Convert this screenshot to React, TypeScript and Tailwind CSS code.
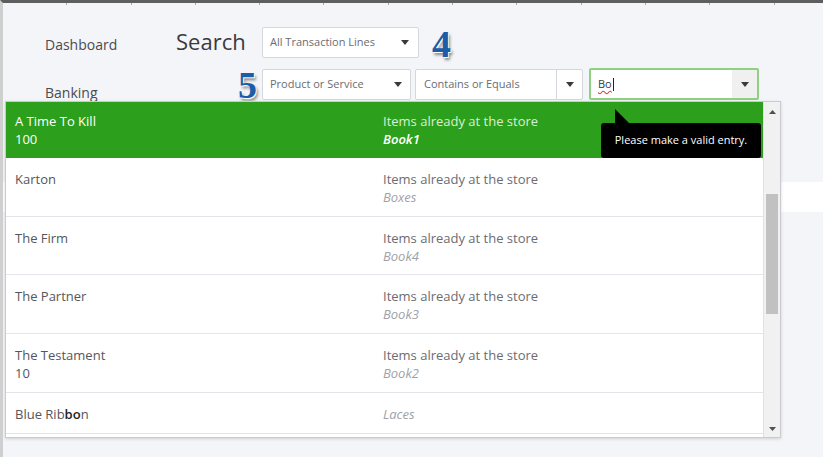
import React from "react";

const Caret = ({ className = "" }: { className?: string }) => (
  <svg width="8" height="5" viewBox="0 0 8 5" className={className}>
    <path d="M0 0 L8 0 L4 5 Z" fill="#393a3d" />
  </svg>
);

const Num = ({ n }: { n: string }) => (
  <span
    className="text-[38px] leading-none font-bold text-[#1c5ca8] [text-shadow:1px_1px_0_#fff,2px_3px_3px_rgba(0,0,0,0.45)]"
    style={{ fontFamily: '"Liberation Serif", "DejaVu Serif", serif' }}
  >
    {n}
  </span>
);

type Row = { name: React.ReactNode; qty?: string; desc?: string; sku: string; h: number };

const rows: Row[] = [
  { name: "Karton", desc: "Items already at the store", sku: "Boxes", h: 59 },
  { name: "The Firm", desc: "Items already at the store", sku: "Book4", h: 58 },
  { name: "The Partner", desc: "Items already at the store", sku: "Book3", h: 59 },
  { name: "The Testament", qty: "10", desc: "Items already at the store", sku: "Book2", h: 59 },
  {
    name: (
      <>
        Blue Rib<span className="font-semibold text-[#222]">bo</span>n
      </>
    ),
    sku: "Laces",
    h: 41,
  },
];

export default function App() {
  return (
    <div
      className="relative w-[823px] h-[457px] overflow-hidden bg-[#f4f5f8] border-t-[3px] border-t-[#5e5e5e] border-l-[3px] border-l-[#cfcfcf] text-[#393a3d]"
      style={{ fontFamily: '"Open Sans", Lato, "Liberation Sans", sans-serif' }}
    >
      {/* ruler ticks on top bar */}
      <div className="absolute top-0 left-0 right-0 h-[2px] flex">
        {Array.from({ length: 13 }).map((_, i) => (
          <div key={i} className="w-[64.3px] h-[2px] border-r border-r-[#a8a8a8] shrink-0" />
        ))}
      </div>

      {/* Row 1 */}
      <div className="flex items-center mt-[24px] h-[31px]">
        <div className="w-[173px] pl-[42px] pt-[3px] text-[14px] text-[#4a4b4f]">Dashboard</div>
        <div className="w-[86px] text-[22px] leading-none text-[#393a3d] -mt-[3px]">Search</div>
        <div className="w-[157px] h-[31px] bg-white border border-[#d4d7dc] rounded-[2px] flex items-center justify-between pl-[7px] pr-[9px]">
          <span className="text-[11px] text-[#6b6c72]">All Transaction Lines</span>
          <Caret />
        </div>
        <div className="ml-[13px] mt-[2px]">
          <Num n="4" />
        </div>
      </div>

      {/* Row 2 */}
      <div className="flex items-center mt-[10px] h-[32px]">
        <div className="w-[173px] pl-[42px] text-[14px] text-[#4a4b4f] pt-[16px]">Banking</div>
        <div className="w-[86px] flex justify-end pr-[5px] pt-[2px]">
          <Num n="5" />
        </div>
        <div className="w-[149px] h-[31px] bg-white border border-[#d4d7dc] rounded-[2px] flex items-center justify-between pl-[7px] pr-[8px]">
          <span className="text-[11px] text-[#6b6c72]">Product or Service</span>
          <Caret />
        </div>
        <div className="ml-[4px] w-[168px] h-[31px] bg-white border border-[#d4d7dc] rounded-[2px] flex items-center">
          <span className="flex-1 pl-[8px] text-[11px] text-[#6b6c72]">Contains or Equals</span>
          <div className="w-[26px] h-full border-l border-l-[#d4d7dc] flex items-center justify-center">
            <Caret />
          </div>
        </div>
        <div className="ml-[6px] w-[170px] h-[32px] bg-white border-2 border-[#8fd083] rounded-[2px] flex items-center">
          <span className="flex-1 pl-[7px] text-[11px] text-[#393a3d] flex items-center">
            <span className="underline decoration-wavy decoration-[#e04040] underline-offset-2">Bo</span>
            <span className="w-[1px] h-[13px] bg-[#222] ml-[1px]" />
          </span>
          <div className="w-[25px] h-full bg-[#f0f0f1] flex items-center justify-center">
            <Caret />
          </div>
        </div>
      </div>

      {/* White band behind dropdown */}
      <div className="mt-[82px] h-[30px] bg-white" />

      {/* Dropdown list */}
      <div className="absolute left-[2px] top-[98px] w-[776px] h-[337px] bg-white border border-[#c9cbcf] shadow-[0_1px_3px_rgba(0,0,0,0.15)] flex overflow-hidden">
        <div className="flex-1 flex flex-col overflow-hidden">
          <div className="h-[56px] shrink-0 bg-[#2ca01c] grid grid-cols-[368px_1fr] pl-[9px] pt-[10px] text-[13px] leading-[18px]">
            <div className="text-white">
              <div>A Time To Kill</div>
              <div>100</div>
            </div>
            <div>
              <div className="text-[#d9efd5]">Items already at the store</div>
              <div className="text-white font-semibold italic">Book1</div>
            </div>
          </div>
          {rows.map((r, i) => (
            <div
              key={i}
              className="shrink-0 border-b border-b-[#e3e5ea] grid grid-cols-[368px_1fr] pl-[9px] pt-[12px] text-[13px] leading-[18px]"
              style={{ height: r.h }}
            >
              <div className="text-[#55565b]">
                <div>{r.name}</div>
                {r.qty && <div>{r.qty}</div>}
              </div>
              <div>
                {r.desc && <div className="text-[#6b6c72]">{r.desc}</div>}
                <div className="text-[#a0a2a7] italic">{r.sku}</div>
              </div>
            </div>
          ))}
        </div>
        {/* Scrollbar */}
        <div className="w-[17px] shrink-0 bg-[#f1f1f1] border-l border-l-[#e2e2e2] flex flex-col items-center">
          <svg width="7" height="4" viewBox="0 0 7 4" className="mt-[8px]">
            <path d="M0 4 L7 4 L3.5 0 Z" fill="#505050" />
          </svg>
          <div className="mt-[80px] w-[12px] h-[120px] bg-[#c1c1c1]" />
          <div className="flex-1" />
          <svg width="7" height="4" viewBox="0 0 7 4" className="mb-[6px]">
            <path d="M0 0 L7 0 L3.5 4 Z" fill="#505050" />
          </svg>
        </div>
      </div>

      {/* Tooltip */}
      <svg width="18" height="16" viewBox="0 0 18 16" className="absolute left-[612px] top-[106px]">
        <path d="M0 0 L0 16 L16 16 Z" fill="#000" />
      </svg>
      <div className="absolute left-[598px] top-[120px] w-[160px] h-[35px] bg-black rounded-[3px] flex items-center justify-center text-white text-[11px]">
        Please make a valid entry.
      </div>
    </div>
  );
}
